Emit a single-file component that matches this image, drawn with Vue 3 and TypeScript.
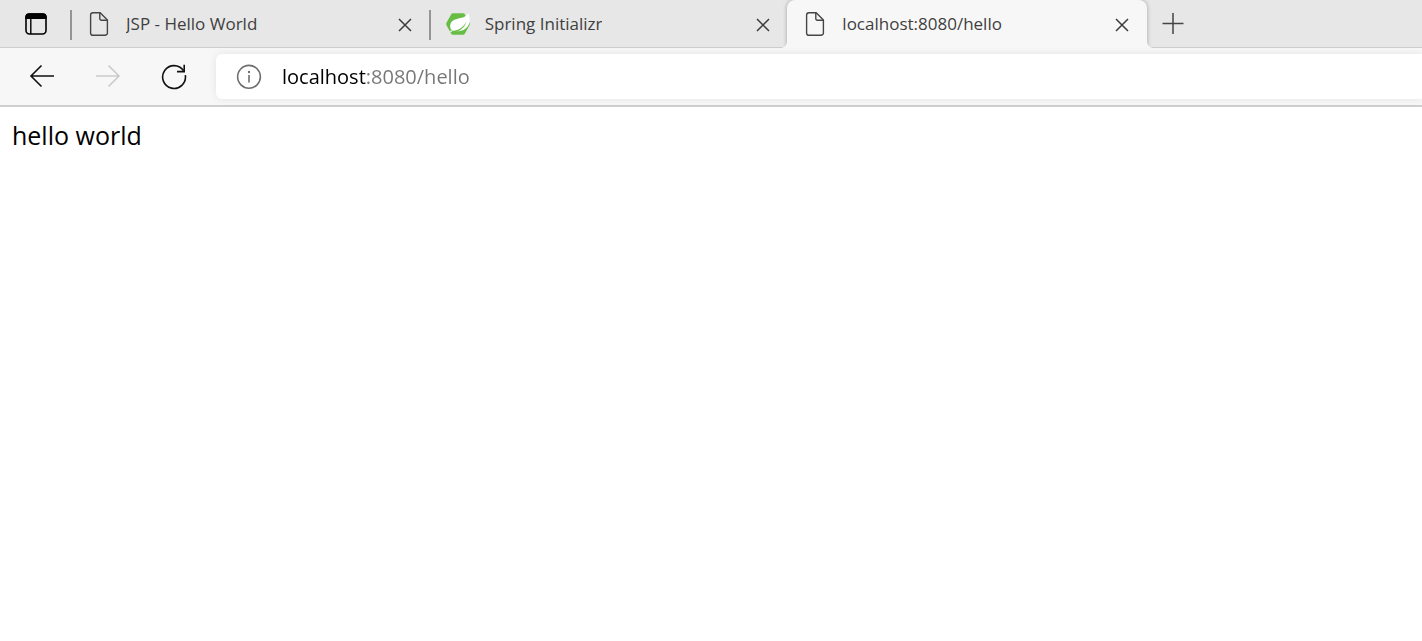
<script setup lang="ts">
import { ref } from 'vue'

interface Tab {
  id: number
  title: string
  icon: 'page' | 'spring'
}

const tabs = ref<Tab[]>([
  { id: 1, title: 'JSP - Hello World', icon: 'page' },
  { id: 2, title: 'Spring Initializr', icon: 'spring' },
  { id: 3, title: 'localhost:8080/hello', icon: 'page' },
])
const activeId = ref(3)
const address = ref('localhost:8080/hello')

function closeTab(id: number): void {
  tabs.value = tabs.value.filter((tab) => tab.id !== id)
}

function addTab(): void {
  const id = Date.now()
  tabs.value.push({ id, title: 'New tab', icon: 'page' })
  activeId.value = id
}
</script>

<template>
  <div class="browser">
    <header class="strip">
      <button class="tab-actions" type="button" aria-label="Tab actions menu">
        <svg width="24" height="24" viewBox="0 0 24 24" fill="none" stroke="#000">
          <rect x="2" y="2" width="20" height="20" rx="3.5" stroke-width="1.6" />
          <path d="M1.2 7V5A3.8 3.8 0 0 1 5 1.200h14A3.8 3.8 0 0 1 22.8 5v2z" fill="#000" stroke="none" />
          <path d="M6.8 6v16" stroke-width="1.4" />
        </svg>
      </button>
      <nav class="tabs" aria-label="Tabs">
        <div v-for="tab in tabs" :key="tab.id" class="tab" :class="{ active: tab.id === activeId }">
          <button class="tab-label" type="button" @click="activeId = tab.id">
            <svg v-if="tab.icon === 'page'" class="tab-icon" viewBox="0 0 24 24" fill="none" stroke="#454545" stroke-width="1.4" stroke-linejoin="round">
              <path d="M6 .8h7.200L20.400 8v12.900a2.400 2.400 0 0 1-2.400 2.400H6a2.400 2.400 0 0 1-2.400-2.400V3.200A2.400 2.400 0 0 1 6 .8z" />
              <path d="M12.800 .8v6a1.500 1.500 0 0 0 1.500 1.500h6" />
            </svg>
            <svg v-else class="tab-icon" viewBox="0 0 24 24">
              <path d="M7 1.200h10q1.200 0 1.800 1.100l4.700 8.500q.6 1.200 0 2.400l-4.700 8.500q-.6 1.100-1.800 1.100H7q-1.200 0-1.800-1.100L.5 13.200q-.6-1.200 0-2.400l4.700-8.500q.6-1.100 1.800-1.100z" fill="#68bd45" />
              <path d="M22.200 1c-1.200 2.600-3.200 4.100-6.200 4.800C11.500 6.800 5.800 7.400 4.400 12.300c-.8 3 .3 5.200 1.800 6.500 3.200.8 8.600.9 12.300-1.500 3-2 4.900-4.700 5.100-7.900.2-3-.3-5.900-1.400-8.400z" fill="#fff" />
              <path d="M4.800 19c5.700-.2 12-2.300 15.600-9.600-2 7.200-7.600 10.600-14.400 11z" fill="#68bd45" />
              <circle cx="5" cy="19.400" r=".8" fill="#fff" />
            </svg>
            <span class="tab-title">{{ tab.title }}</span>
          </button>
          <button class="tab-close" type="button" :aria-label="`Close ${tab.title}`" @click="closeTab(tab.id)">
            <svg width="14" height="14" viewBox="0 0 14 14" fill="none" stroke="#3c3c3c" stroke-width="1.500">
              <path d="M1 1l12 12M13 1L1 13" />
            </svg>
          </button>
        </div>
      </nav>
      <button class="new-tab" type="button" aria-label="New tab" @click="addTab">
        <svg width="22" height="22" viewBox="0 0 22 22" fill="none" stroke="#444" stroke-width="1.500">
          <path d="M11 0v21M.5 10.500h21" />
        </svg>
      </button>
    </header>

    <div class="toolbar">
      <button class="tool" type="button" aria-label="Back">
        <svg width="26" height="26" viewBox="0 0 26 26" fill="none" stroke="#111" stroke-width="1.600">
          <path d="M25 12H2M12.500 1.500L2 12l10.500 10.500" />
        </svg>
      </button>
      <button class="tool" type="button" aria-label="Forward" disabled>
        <svg width="26" height="26" viewBox="0 0 26 26" fill="none" stroke="#cbcbcb" stroke-width="1.600">
          <path d="M1 12h23M13.500 1.500L24 12 13.500 22.500" />
        </svg>
      </button>
      <button class="tool" type="button" aria-label="Refresh">
        <svg width="26" height="26" viewBox="0 0 26 26" fill="none" stroke="#111" stroke-width="1.600">
          <path d="M24.300 11.200A11.400 11.400 0 1 1 22.600 6.800" />
          <path d="M23.200 .8v6.800H16" />
        </svg>
      </button>
      <div class="address">
        <button class="site-info" type="button" aria-label="View site information">
          <svg width="26" height="26" viewBox="0 0 26 26" fill="none" stroke="#6e6e6e" stroke-width="1.600">
            <circle cx="13" cy="12.800" r="11.400" />
            <path d="M13 11v7.500" />
            <circle cx="13" cy="8" r="1.200" fill="#6e6e6e" stroke="none" />
          </svg>
        </button>
        <input v-model="address" class="url" type="text" aria-label="Address and search bar" spellcheck="false" />
      </div>
    </div>

    <main class="page">hello world</main>
  </div>
</template>

<style>
body {
  background: #fff;
}
</style>

<style scoped>
.browser {
  min-height: 100vh;
  overflow: hidden;
  font-family: "Open Sans", "Noto Sans", sans-serif;
  background: #fff;
}

button {
  display: flex;
  align-items: center;
  justify-content: center;
  padding: 0;
  border: 0;
  background: none;
  font: inherit;
  color: inherit;
}

svg {
  flex: none;
}

.strip {
  display: flex;
  height: 48px;
  background: #e7e7e7;
  box-shadow: inset 0 -1px #cecece;
}

.tab-actions {
  flex: none;
  width: 71px;
}

.tabs {
  display: flex;
  min-width: 0;
}

.tab {
  position: relative;
  display: flex;
  flex: 0 1 359px;
  width: 359px;
  min-width: 0;
  color: #3f3f3f;
}

.tab:not(.active)::before {
  content: "";
  position: absolute;
  top: 10px;
  left: -1px;
  width: 2px;
  height: 30px;
  background: #959595;
}

.tab.active {
  flex-basis: 360px;
  margin-left: -1px;
  background: #f7f7f7;
  border-radius: 8px 8px 0 0;
  box-shadow: 0 0 4px rgba(0, 0, 0, 0.3);
  clip-path: inset(0 -5px 0 -5px);
}

.tab.active::before,
.tab.active::after {
  content: "";
  position: absolute;
  bottom: 0;
  width: 5px;
  height: 5px;
}

.tab.active::before {
  right: 100%;
  background: radial-gradient(circle at 0 0, transparent 4px, #f7f7f7 5px);
}

.tab.active::after {
  left: 100%;
  background: radial-gradient(circle at 100% 0, transparent 4px, #f7f7f7 5px);
}

.tab-label {
  flex: 1;
  min-width: 0;
  justify-content: flex-start;
  gap: 15px;
  padding-left: 16px;
}

.tab-icon {
  width: 24px;
  height: 24px;
}

.tab-title {
  overflow: hidden;
  font-size: 17px;
  line-height: 24px;
  white-space: nowrap;
  text-overflow: ellipsis;
}

.tab-close {
  flex: none;
  width: 50px;
  padding-top: 2px;
}

.new-tab {
  flex: none;
  width: 52px;
}

.toolbar {
  display: flex;
  align-items: center;
  height: 57px;
  padding-left: 9px;
  background: #f7f7f7;
  border-bottom: 2px solid #cecece;
}

.tool {
  flex: none;
  width: 66px;
  height: 44px;
}

.address {
  display: flex;
  flex: 1;
  align-items: center;
  min-width: 0;
  height: 45px;
  margin-left: 9px;
  background: #fff;
  border-radius: 6px 0 0 6px;
  box-shadow: 0 0 8px rgba(0, 0, 0, 0.08);
}

.site-info {
  flex: none;
  width: 66px;
  height: 44px;
}

.url {
  flex: 1;
  min-width: 0;
  height: 32px;
  padding: 0;
  border: 0;
  outline: 0;
  font: 20px/32px "Open Sans", "Noto Sans", sans-serif;
  color: transparent;
  caret-color: #000;
  background: linear-gradient(to right, #000 84px, #767676 84px);
  background-clip: text;
}

.page {
  padding: 10px 12px;
  font-size: 25px;
  line-height: 36px;
  color: #000;
}
</style>
